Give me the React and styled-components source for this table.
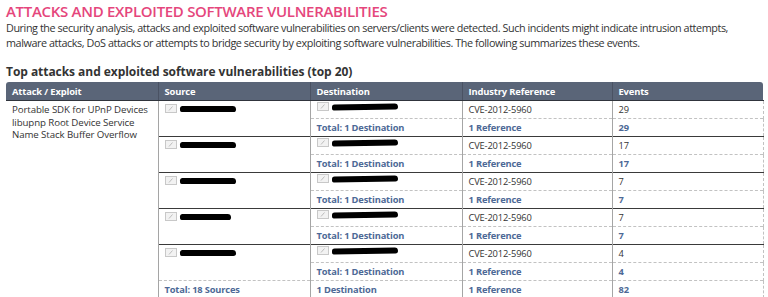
import styled, { createGlobalStyle } from "styled-components"

const Global = createGlobalStyle`
  body {
    margin: 0;
    background: #fff;
    font-family: "Open Sans", "DejaVu Sans", sans-serif;
    color: #333;
  }
`;

const Page = styled.div`
  padding: 2px 5px 0 6px;
`;

const Title = styled.h1`
  margin: 0;
  font-size: 15px;
  font-weight: 600;
  line-height: 18px;
  letter-spacing: -0.3px;
  color: #e5467c;
`;

const Intro = styled.p`
  margin: 0;
  font-size: 10.8px;
  line-height: 15px;
  color: #333;
  letter-spacing: -0.42px;
`;

const Heading = styled.h2`
  margin: 14px 0 2px;
  font-size: 12px;
  font-weight: 700;
  line-height: 16px;
  letter-spacing: -0.05px;
  color: #333;
`;

const Table = styled.table`
  width: 757px;
  border-collapse: collapse;
  table-layout: fixed;
  font-size: 9.3px;
  letter-spacing: -0.15px;
`;

const HeadCell = styled.th`
  height: 18px;
  padding: 0 6px;
  background: #5a6578;
  color: #fff;
  font-size: 9.4px;
  font-weight: 700;
  text-align: left;
  border-left: 1px solid #4a5263;
  border-bottom: 1px solid #30343c;
  &:first-child {
    border-left: none;
    border-top-left-radius: 3px;
  }
  &:last-child {
    border-top-right-radius: 3px;
  }
`;

const Cell = styled.td`
  height: 17px;
  padding: 0 6px;
  vertical-align: ${(p) => (p.$top ? "top" : "middle")};
  border-left: 1px solid #a5a5a5;
  border-top: ${(p) =>
    p.$solid ? "1.5px solid #3a3a3a" : p.$dashed ? "1px dashed #c2c2c2" : "none"};
  border-right: ${(p) => (p.$last ? "1px dashed #c2c2c2" : "none")};
  color: ${(p) => (p.$total ? "#4d6996" : "#333")};
  font-weight: ${(p) => (p.$total ? 700 : 400)};
  white-space: nowrap;
`;

const AttackCell = styled.td`
  vertical-align: top;
  padding: 3px 6px 0;
  line-height: 12.5px;
  font-size: 9.7px;
  letter-spacing: -0.1px;
  color: #333;
  white-space: normal;
`;

const Host = styled.span`
  display: inline-flex;
  align-items: center;
  gap: 3px;
  transform: translateY(-2px);
`;

const Blob = styled.span`
  display: inline-block;
  width: ${(p) => p.$w}px;
  height: 6px;
  background: #000;
  border-radius: 3px 4px 3px 2px;
  transform: rotate(${(p) => p.$r || 0}deg);
`;

const Thumb = () => (
  <svg width="12" height="9" viewBox="0 0 12 9">
    <rect x="0.5" y="0.5" width="11" height="8" fill="#f2f2f2" stroke="#c8c8c8" />
    <path d="M4 6.5 L7.5 2.5" stroke="#bdbdbd" strokeWidth="1" />
  </svg>
);

const groups = [
  { src: 56, dst: 66, events: 29 },
  { src: 56, dst: 66, events: 17 },
  { src: 56, dst: 66, events: 7 },
  { src: 51, dst: 66, events: 7 },
  { src: 56, dst: 66, events: 4 },
];

export default function App() {
  return (
    <>
      <Global />
      <Page>
        <Title>ATTACKS AND EXPLOITED SOFTWARE VULNERABILITIES</Title>
        <Intro>
          During the security analysis, attacks and exploited software vulnerabilities on servers/clients were detected. Such incidents might indicate intrusion attempts, malware attacks, DoS attacks or attempts to bridge security by exploiting software vulnerabilities. The following summarizes these events.
        </Intro>
        <Heading>Top attacks and exploited software vulnerabilities (top 20)</Heading>
        <Table>
          <colgroup>
            <col style={{ width: 152 }} />
            <col style={{ width: 152 }} />
            <col style={{ width: 152 }} />
            <col style={{ width: 150 }} />
            <col style={{ width: 151 }} />
          </colgroup>
          <thead>
            <tr>
              <HeadCell>Attack / Exploit</HeadCell>
              <HeadCell>Source</HeadCell>
              <HeadCell>Destination</HeadCell>
              <HeadCell>Industry Reference</HeadCell>
              <HeadCell>Events</HeadCell>
            </tr>
          </thead>
          <tbody>
            {groups.map((g, i) => [
              <tr key={`d${i}`}>
                {i === 0 && (
                  <AttackCell rowSpan={groups.length * 2 + 1}>
                    Portable SDK for UPnP Devices libupnp Root Device Service Name Stack Buffer Overflow
                  </AttackCell>
                )}
                <Cell rowSpan={2} $top $solid={i > 0} style={{ paddingTop: 4 }}>
                  <Host>
                    <Thumb />
                    <Blob $w={g.src} />
                  </Host>
                </Cell>
                <Cell $solid={i > 0}>
                  <Host>
                    <Thumb />
                    <Blob $w={g.dst} $r={-1} />
                  </Host>
                </Cell>
                <Cell $solid={i > 0}>CVE-2012-5960</Cell>
                <Cell $solid={i > 0} $last>{g.events}</Cell>
              </tr>,
              <tr key={`t${i}`}>
                <Cell $dashed $total>Total: 1 Destination</Cell>
                <Cell $dashed $total>1 Reference</Cell>
                <Cell $dashed $total $last>{g.events}</Cell>
              </tr>,
            ])}
            <tr>
              <Cell $dashed $total>Total: 18 Sources</Cell>
              <Cell $dashed $total>1 Destination</Cell>
              <Cell $dashed $total>1 Reference</Cell>
              <Cell $dashed $total $last>82</Cell>
            </tr>
          </tbody>
        </Table>
      </Page>
    </>
  )
}
